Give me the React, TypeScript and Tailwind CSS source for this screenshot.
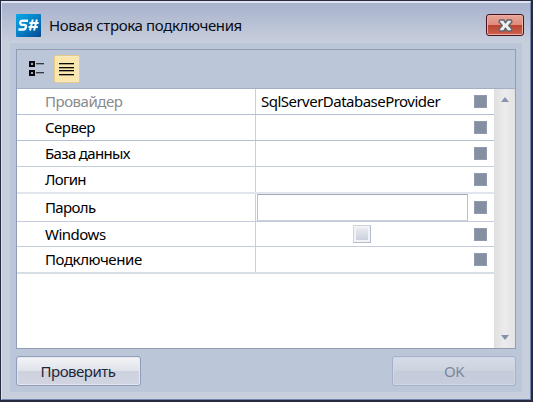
import React from "react";

type RowData = {
  label: string;
  height: string;
  pad: string;
  tracking: string;
  kind?: "text" | "password" | "check";
  value?: string;
  muted?: boolean;
  line: string;
};

const rows: RowData[] = [
  { label: "Провайдер", height: "h-[26px]", pad: "pt-[5px]", tracking: "tracking-[-0.47px]", value: "SqlServerDatabaseProvider", muted: true, line: "border-b border-[#b5bfd3]" },
  { label: "Сервер", height: "h-[26px]", pad: "pt-[5px]", tracking: "tracking-[-0.5px]", line: "border-b border-[#b5bfd3]" },
  { label: "База данных", height: "h-[26px]", pad: "pt-[5px]", tracking: "tracking-[-0.66px]", line: "border-b border-[#c5cddd]" },
  { label: "Логин", height: "h-[27px]", pad: "pt-[5px]", tracking: "tracking-[-0.75px]", line: "border-b-2 border-[#e1e5ed]" },
  { label: "Пароль", height: "h-[28px]", pad: "pt-[6px]", tracking: "tracking-[-0.65px]", kind: "password", line: "border-b border-[#c3cbdc]" },
  { label: "Windows", height: "h-[25px]", pad: "pt-[5px]", tracking: "tracking-[-0.5px]", kind: "check", line: "border-b border-[#c3cbdc]" },
  { label: "Подключение", height: "h-[27px]", pad: "pt-[5px]", tracking: "tracking-[-0.42px]", line: "border-b-2 border-[#d8dee6]" },
];

function Logo() {
  return (
    <svg width="25" height="23" viewBox="0 0 25 23" className="shrink-0">
      <defs>
        <linearGradient id="logo" x1="0" y1="0" x2="1" y2="1">
          <stop offset="0" stopColor="#08a9e8" />
          <stop offset="0.5" stopColor="#087fc5" />
          <stop offset="1" stopColor="#064890" />
        </linearGradient>
      </defs>
      <rect width="25" height="23" rx="1" fill="url(#logo)" />
      <path d="M12 6.7H6Q4.5 6.7 4.2 8.4T5.4 10.9H8.3Q10.4 10.9 9.8 13.2T7.4 15.5H2.4" fill="none" stroke="#f4fcff" strokeWidth="2.4" />
      <path d="M16.8 5.5L14 16.5M20.9 5.5L18.1 16.5M13.4 8.9H22.7M12.5 13.1H21.8" fill="none" stroke="#f4fcff" strokeWidth="2" />
    </svg>
  );
}

function CategoryIcon() {
  return (
    <svg width="16" height="16" viewBox="0 0 16 16" shapeRendering="crispEdges" className="block">
      <path d="M0 0H6V6H0ZM0 9H6V15H0Z" fill="#050609" />
      <path d="M2 2H4V4H2ZM2 11H4V13H2Z" fill="#a6acb5" />
      <path d="M7 2.5H15M7 11.5H15" stroke="#353a43" />
      <path d="M7 3.5H15M7 12.5H15" stroke="#8c96a5" />
    </svg>
  );
}

function ListIcon() {
  return (
    <svg width="15" height="13" viewBox="0 0 15 13" shapeRendering="crispEdges">
      <path d="M0 1.5H15M0 5.5H15M0 8.5H15M0 12.5H15" stroke="#a99f7b" />
      <path d="M0 .5H15M0 4.5H15M0 7.5H15M0 11.5H15" stroke="#080805" />
    </svg>
  );
}

function CloseIcon() {
  return (
    <svg width="15" height="13" viewBox="0 0 16 14">
      <path
        d="M2 1H6L8 4L10 1H14L15 3L11.5 7L15 11L14 13H10L8 10L6 13H2L1 11L4.5 7L1 3Z"
        fill="#eceeef"
        stroke="#65666f"
        strokeWidth="1.6"
        strokeLinejoin="round"
      />
    </svg>
  );
}

function PropertyRow({ row }: { row: RowData }) {
  return (
    <div className={`flex ${row.height} ${row.line}`}>
      <div className={`w-[238px] shrink-0 pl-[28px] ${row.pad} ${row.tracking} ${row.muted ? "text-[#8a8a8a]" : "text-black"}`}>
        {row.label}
      </div>
      <div className="w-px shrink-0 bg-[#c8cfe0]" />
      <div className="flex w-[218px] shrink-0">
        {row.value && <span className="pt-[5px] pl-[5px] tracking-[-0.52px]">{row.value}</span>}
        {row.kind === "password" && (
          <div className="ml-px h-[27px] w-[211px] border border-t-[#a5abb6] border-r-[#b9c0cb] border-b-[#c9d0dd] border-l-[#b9c0cb]" />
        )}
        {row.kind === "check" && (
          <div className="mt-[3px] ml-[97px] h-[18px] w-[18px] border border-t-[#d0d4dc] border-r-[#b3bccd] border-b-[#b3bccd] border-l-[#d0d4dc] bg-[#f1f3f7] p-[2px]">
            <div className="h-[12px] w-[12px] bg-linear-to-b from-[#e8ebf0] to-[#cbd1dd]" />
          </div>
        )}
      </div>
      <div className={`h-[13px] w-[13px] shrink-0 border border-[#929bad] bg-[#848fa1] ${row.kind === "password" ? "mt-[7px]" : "mt-[6px]"}`} />
    </div>
  );
}

export default function App() {
  return (
    <div className="flex h-[402px] w-[533px] flex-col overflow-hidden border border-r-2 border-b-2 border-[#272b42] bg-[#c7cedc] font-['Noto_Sans','Open_Sans',sans-serif] text-[15px] leading-[14px] text-black">
      <div className="flex min-h-0 flex-1 flex-col border border-t-2 border-r-[#7789ae] border-b-[#7085ad] border-t-[#e0e4f1] border-l-[#dce1ed] bg-[linear-gradient(to_bottom,#a7b2cc_0px,#c7cedc_39px)] px-[8px]">
        <header className="flex h-[40px] shrink-0 pl-[6px]">
          <div className="pt-[11px]"><Logo /></div>
          <h1 className="ml-[8px] pt-[15px] tracking-[-0.36px] whitespace-nowrap text-[#080c14]">Новая строка подключения</h1>
          <button aria-label="Закрыть" className="mt-[11px] mr-[-2px] ml-auto flex h-[22px] w-[38px] items-center justify-center rounded-[3px] border border-[#471222] bg-[linear-gradient(to_bottom,#e9a597_0%,#df8b7d_49%,#bc442f_51%,#cc624f_100%)] shadow-[inset_0_0_0_1px_#edb0a5]">
            <CloseIcon />
          </button>
        </header>
        <main className="flex h-[349px] flex-col bg-[#bbc6d8] px-[6px] pt-[6px]">
          <section className="flex h-[300px] shrink-0 flex-col border border-[#919db3]">
            <div className="flex h-[39px] shrink-0 border-b border-[#a3afc4]">
              <div className="pt-[11px] pl-[12px]"><CategoryIcon /></div>
              <div className="mt-[5px] ml-[9px] flex h-[28px] w-[26px] items-center rounded-[2px] border border-[#e8cb83] bg-[#fbe6ad] pl-[4px] shadow-[inset_0_0_0_1px_#f5e8c5]"><ListIcon /></div>
            </div>
            <div className="flex min-h-0 flex-1 bg-white">
              <div className="w-[477px] shrink-0">
                {rows.map((row) => <PropertyRow key={row.label} row={row} />)}
              </div>
              <div className="flex flex-1 flex-col items-center justify-between bg-linear-to-r from-[#dfdfdf] via-[#ececee] to-[#e3e3e4] pt-[8px] pb-[8px]">
                <svg width="8" height="5" viewBox="0 0 8 5"><path d="M0 5L4 0L8 5Z" fill="#8794ad" /></svg>
                <svg width="8" height="5" viewBox="0 0 8 5"><path d="M0 0H8L4 5Z" fill="#8491aa" /></svg>
              </div>
            </div>
          </section>
          <footer className="mt-[7px] flex justify-between">
            <button className="h-[30px] w-[125px] rounded-[3px] border border-[#929eb9] bg-[linear-gradient(to_bottom,#f3f4f7_0%,#dfe3e9_50%,#cdd2de_51%,#d1d5e1_100%)] pr-px pb-px tracking-[-0.5px] text-[#1d283b] shadow-[inset_0_0_0_1px_#e5e8ef]">Проверить</button>
            <button disabled className="h-[30px] w-[124px] rounded-[3px] border border-[#a5b1c9] bg-[linear-gradient(to_bottom,#d7dde7_0%,#ccd3df_50%,#c4cbda_51%,#c7cddc_100%)] pb-px tracking-[-0.5px] text-[#7b879c] shadow-[inset_0_0_0_1px_#d1d7e4]">OK</button>
          </footer>
        </main>
      </div>
    </div>
  );
}
